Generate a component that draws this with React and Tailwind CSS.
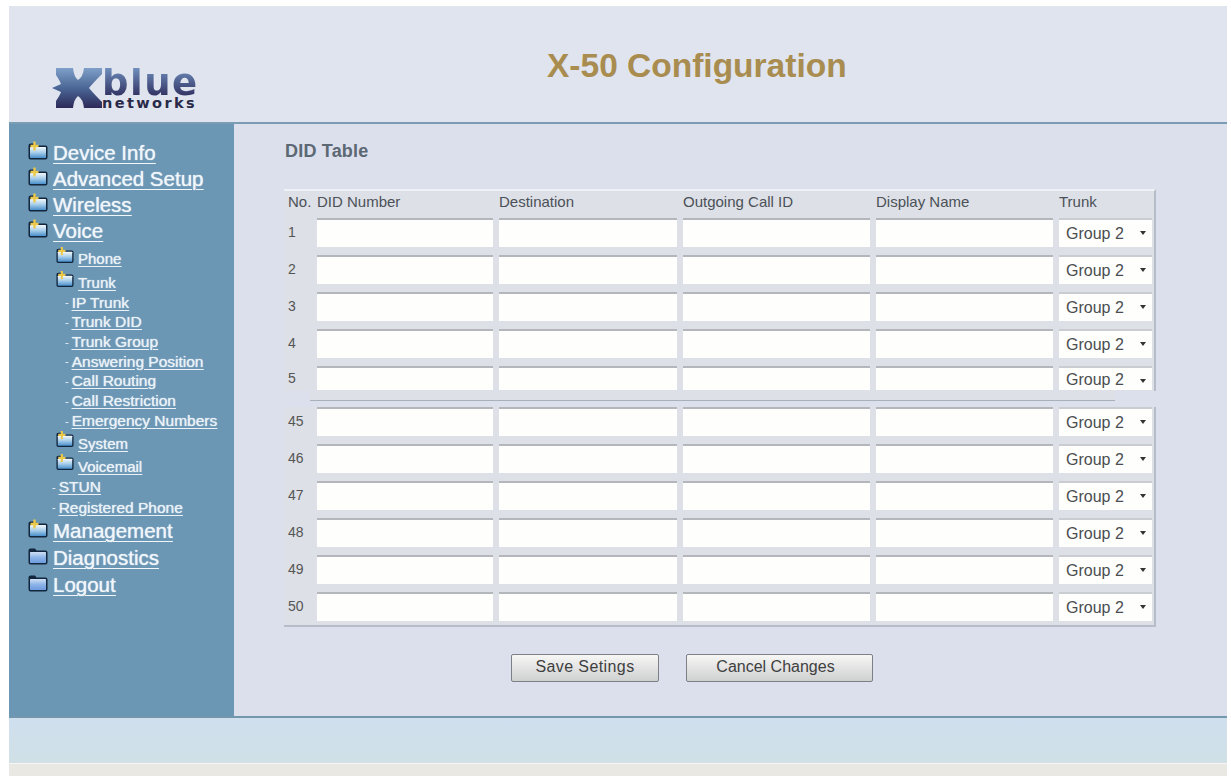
import { useId } from "react";

const navItems = [
  { label: "Device Info", level: 0, plus: true, row: "h-[26px]" },
  { label: "Advanced Setup", level: 0, plus: true, row: "h-[26px]" },
  { label: "Wireless", level: 0, plus: true, row: "h-[26px]" },
  { label: "Voice", level: 0, plus: true, row: "h-[27px]" },
  { label: "Phone", level: 1, plus: true, row: "h-[27px]" },
  { label: "Trunk", level: 1, plus: true, row: "h-[21px]" },
  { label: "IP Trunk", level: 2, row: "h-[19px]" },
  { label: "Trunk DID", level: 2, row: "h-[20px]" },
  { label: "Trunk Group", level: 2, row: "h-[20px]" },
  { label: "Answering Position", level: 2, row: "h-[19px]" },
  { label: "Call Routing", level: 2, row: "h-[20px]" },
  { label: "Call Restriction", level: 2, row: "h-[20px]" },
  { label: "Emergency Numbers", level: 2, row: "h-[20px]" },
  { label: "System", level: 1, plus: true, row: "h-[24px]" },
  { label: "Voicemail", level: 1, plus: true, row: "h-[22px]" },
  { label: "STUN", level: 3, row: "h-[20px]" },
  { label: "Registered Phone", level: 3, row: "h-[21px]" },
  { label: "Management", level: 0, plus: true, row: "h-[27px]" },
  { label: "Diagnostics", level: 0, row: "h-[27px]" },
  { label: "Logout", level: 0, row: "h-[27px]" },
];

const topRows = ["1", "2", "3", "4"];
const bottomRows = ["45", "46", "47", "48", "49"];

function FolderIcon({ plus, small }) {
  const id = useId();
  return (
    <svg
      viewBox="0 0 20 19"
      className={small ? "h-[18px] w-[18px] shrink-0 -translate-y-[4px]" : "h-[19px] w-[20px] shrink-0 -translate-y-[3px]"}
    >
      <defs>
        <linearGradient id={id} x1="0" y1="0" x2="0" y2="1">
          <stop offset="0" stopColor={plus ? "#f4f8fb" : "#cfe0f5"} />
          <stop offset="0.5" stopColor={plus ? "#a6cdea" : "#8db4e8"} />
          <stop offset="1" stopColor={plus ? "#4b8fcb" : "#6d9be0"} />
        </linearGradient>
      </defs>
      <path d="M0.5 4.5 Q0.5 2.5 2.5 2.5 H7 L8.5 4.5 H17.5 Q19.5 4.5 19.5 6.5 V16.5 Q19.5 18.5 17.5 18.5 H2.5 Q0.5 18.5 0.5 16.5 Z" fill="#12263d" />
      <rect x="2" y="6" width="16" height="11" rx="0.5" fill={`url(#${id})`} />
      {plus && <path d="M6.5 0.5 V9.5 M2.5 5 H10.5" stroke="#ecc94b" strokeWidth="2.4" fill="none" />}
    </svg>
  );
}

function NavRow({ item }) {
  if (item.level === 0) {
    return (
      <div className={`flex items-center pl-[19px] ${item.row}`}>
        <FolderIcon plus={item.plus} />
        <a className="ml-[5px] text-[20.5px] leading-none text-[#f0f6fa] underline decoration-1 underline-offset-[3px] [text-shadow:0_0_1px_#f0f6fa]">
          {item.label}
        </a>
      </div>
    );
  }
  if (item.level === 1) {
    return (
      <div className={`flex items-center pl-[47px] ${item.row}`}>
        <FolderIcon plus={item.plus} small />
        <a className="ml-[4px] text-[15px] leading-none text-[#eaf2f7] underline underline-offset-2 [text-shadow:0_0_1px_#eaf2f7]">
          {item.label}
        </a>
      </div>
    );
  }
  return (
    <div className={`flex items-center text-[15.5px] leading-none text-[#eaf2f7] ${item.level === 2 ? "pl-[56px]" : "pl-[43px]"} ${item.row}`}>
      <span className="mr-[3px] text-[11px]">-</span>
      <a className="underline underline-offset-2 [text-shadow:0_0_1px_#eaf2f7]">{item.label}</a>
    </div>
  );
}

function Cells({ cut }) {
  const height = cut ? "h-[24px]" : "h-[29px]";
  const input = `border-t-2 border-[#b3b6bb] bg-[#fefefd] outline-none ${height}`;
  return (
    <>
      <input className={`${input} w-[176px]`} />
      <input className={`${input} w-[178px]`} />
      <input className={`${input} w-[187px]`} />
      <input className={`${input} w-[177px]`} />
      <div className={`relative w-[93px] ${height}`}>
        <select className="h-full w-full appearance-none border-t-2 border-[#c9ccd0] bg-[#fefefd] pl-[7px] text-[16px] text-[#4a4d50] outline-none">
          <option>Group 2</option>
        </select>
        <span className="absolute top-[13px] right-[6px] h-0 w-0 border-x-[3.5px] border-t-[4px] border-x-transparent border-t-[#333]" />
      </div>
    </>
  );
}

function TableRow({ no, cut, last }) {
  const rowHeight = cut ? "h-[25px]" : last ? "h-[33px]" : "h-[37px]";
  return (
    <div className={`flex items-start gap-[6px] pl-1 pr-[2px] ${rowHeight}`}>
      <div className={`flex w-[23px] items-center text-[14px] text-[#555] ${cut ? "h-[24px]" : "h-[29px]"}`}>{no}</div>
      <Cells cut={cut} />
    </div>
  );
}

export default function App() {
  return (
    <div className="h-[776px] w-[1231px] overflow-hidden bg-white font-['Liberation_Sans',Arial,sans-serif]">
      <div className="ml-[9px] w-[1218px] pt-[6px]">
        <header className="flex h-[118px] border-b-2 border-[#7b9db3] bg-[#dfe4ee]">
          <div className="flex w-[225px] items-start pl-[43px] pt-[62px]">
            <svg viewBox="0 0 50 40" className="h-[40px] w-[50px] shrink-0">
              <defs>
                <linearGradient id="logoX" x1="0" y1="0" x2="0" y2="1">
                  <stop offset="0" stopColor="#7f9fc8" />
                  <stop offset="0.5" stopColor="#4b6796" />
                  <stop offset="1" stopColor="#2c2958" />
                </linearGradient>
              </defs>
              <path
                d="M4 0 H21 Q22 9 26 12 Q31 9 32 0 H50 V6 Q42 14 37 20 Q42 26 50 34 V40 H32 Q31 31 26 28 Q22 31 21 40 H4 V33 Q8 27 9 24 L0 20 L9 16 Q8 13 4 7 Z"
                fill="url(#logoX)"
              />
            </svg>
            <div className="flex flex-col">
              <span className="bg-gradient-to-b from-[#6f8fbd] to-[#2e2c5c] bg-clip-text font-['DejaVu_Sans',sans-serif] text-[37px] leading-[30px] font-bold tracking-[1.5px] text-transparent">
                blue
              </span>
              <span className="font-['DejaVu_Sans',sans-serif] text-[14.5px] leading-[11px] font-bold tracking-[2.4px] text-[#2a2948]">
                networks
              </span>
            </div>
          </div>
          <h1 className="ml-[313px] pt-[38px] text-[33.5px] leading-[44px] font-bold text-[#a98c4f]">
            X-50 Configuration
          </h1>
        </header>

        <div className="flex h-[592px]">
          <nav className="w-[225px] bg-[#6b97b5] pt-[16px]">
            {navItems.map((item) => (
              <NavRow key={item.label} item={item} />
            ))}
          </nav>

          <main className="flex-1 bg-[#dbe0ec] pl-[50px]">
            <h2 className="pt-[17px] pl-[1px] text-[18px] leading-[20px] font-bold tracking-[0.2px] text-[#5c6873]">DID Table</h2>

            <div className="mt-[28px] w-[872px]">
              <div className="border-t-2 border-r-2 border-[#eef1f6] border-r-[#b7bdc8] bg-[#dde0e6]">
                <div className="flex h-[27px] items-center gap-[6px] pb-[4px] pl-1 pr-[2px] text-[15px] text-[#4b5158]">
                  <div className="w-[23px]">No.</div>
                  <div className="w-[176px]">DID Number</div>
                  <div className="w-[178px]">Destination</div>
                  <div className="w-[187px]">Outgoing Call ID</div>
                  <div className="w-[177px]">Display Name</div>
                  <div className="w-[93px]">Trunk</div>
                </div>
                {topRows.map((no) => (
                  <TableRow key={no} no={no} />
                ))}
                <TableRow no="5" cut />
              </div>

              {/* torn edge between row 5 and row 45 */}
              <div className="h-[16px] bg-[#dbe0ec]">
                <div className="ml-[26px] h-[10px] w-[805px] border-b border-[#a9b0ba] bg-[#dde0e6]" />
              </div>

              <div className="border-r-2 border-b-2 border-[#b7bdc8] bg-[#dde0e6]">
                {bottomRows.map((no) => (
                  <TableRow key={no} no={no} />
                ))}
                <TableRow no="50" last />
              </div>
            </div>

            <div className="mt-[27px] flex gap-[27px] pl-[227px]">
              <button type="button" className="h-[28px] w-[148px] rounded-[2px] border border-[#7d8086] bg-gradient-to-b from-[#f7f7f6] to-[#cfd0d0] pb-[2px] text-[16px] tracking-[0.4px] text-[#3f3f3f]">
                Save Setings
              </button>
              <button type="button" className="h-[28px] w-[187px] rounded-[2px] border border-[#7d8086] bg-gradient-to-b from-[#f7f7f6] to-[#cfd0d0] pr-2 pb-[2px] text-[16px] text-[#3f3f3f]">
                Cancel Changes
              </button>
            </div>
          </main>
        </div>

        <footer className="h-[47px] border-t-2 border-[#7397ad] bg-gradient-to-b from-[#d0dfee] to-[#d0e0e6]" />
        <div className="h-[13px] border-t border-[#f6f6f4] bg-[#e9e8e3]" />
      </div>
    </div>
  );
}
